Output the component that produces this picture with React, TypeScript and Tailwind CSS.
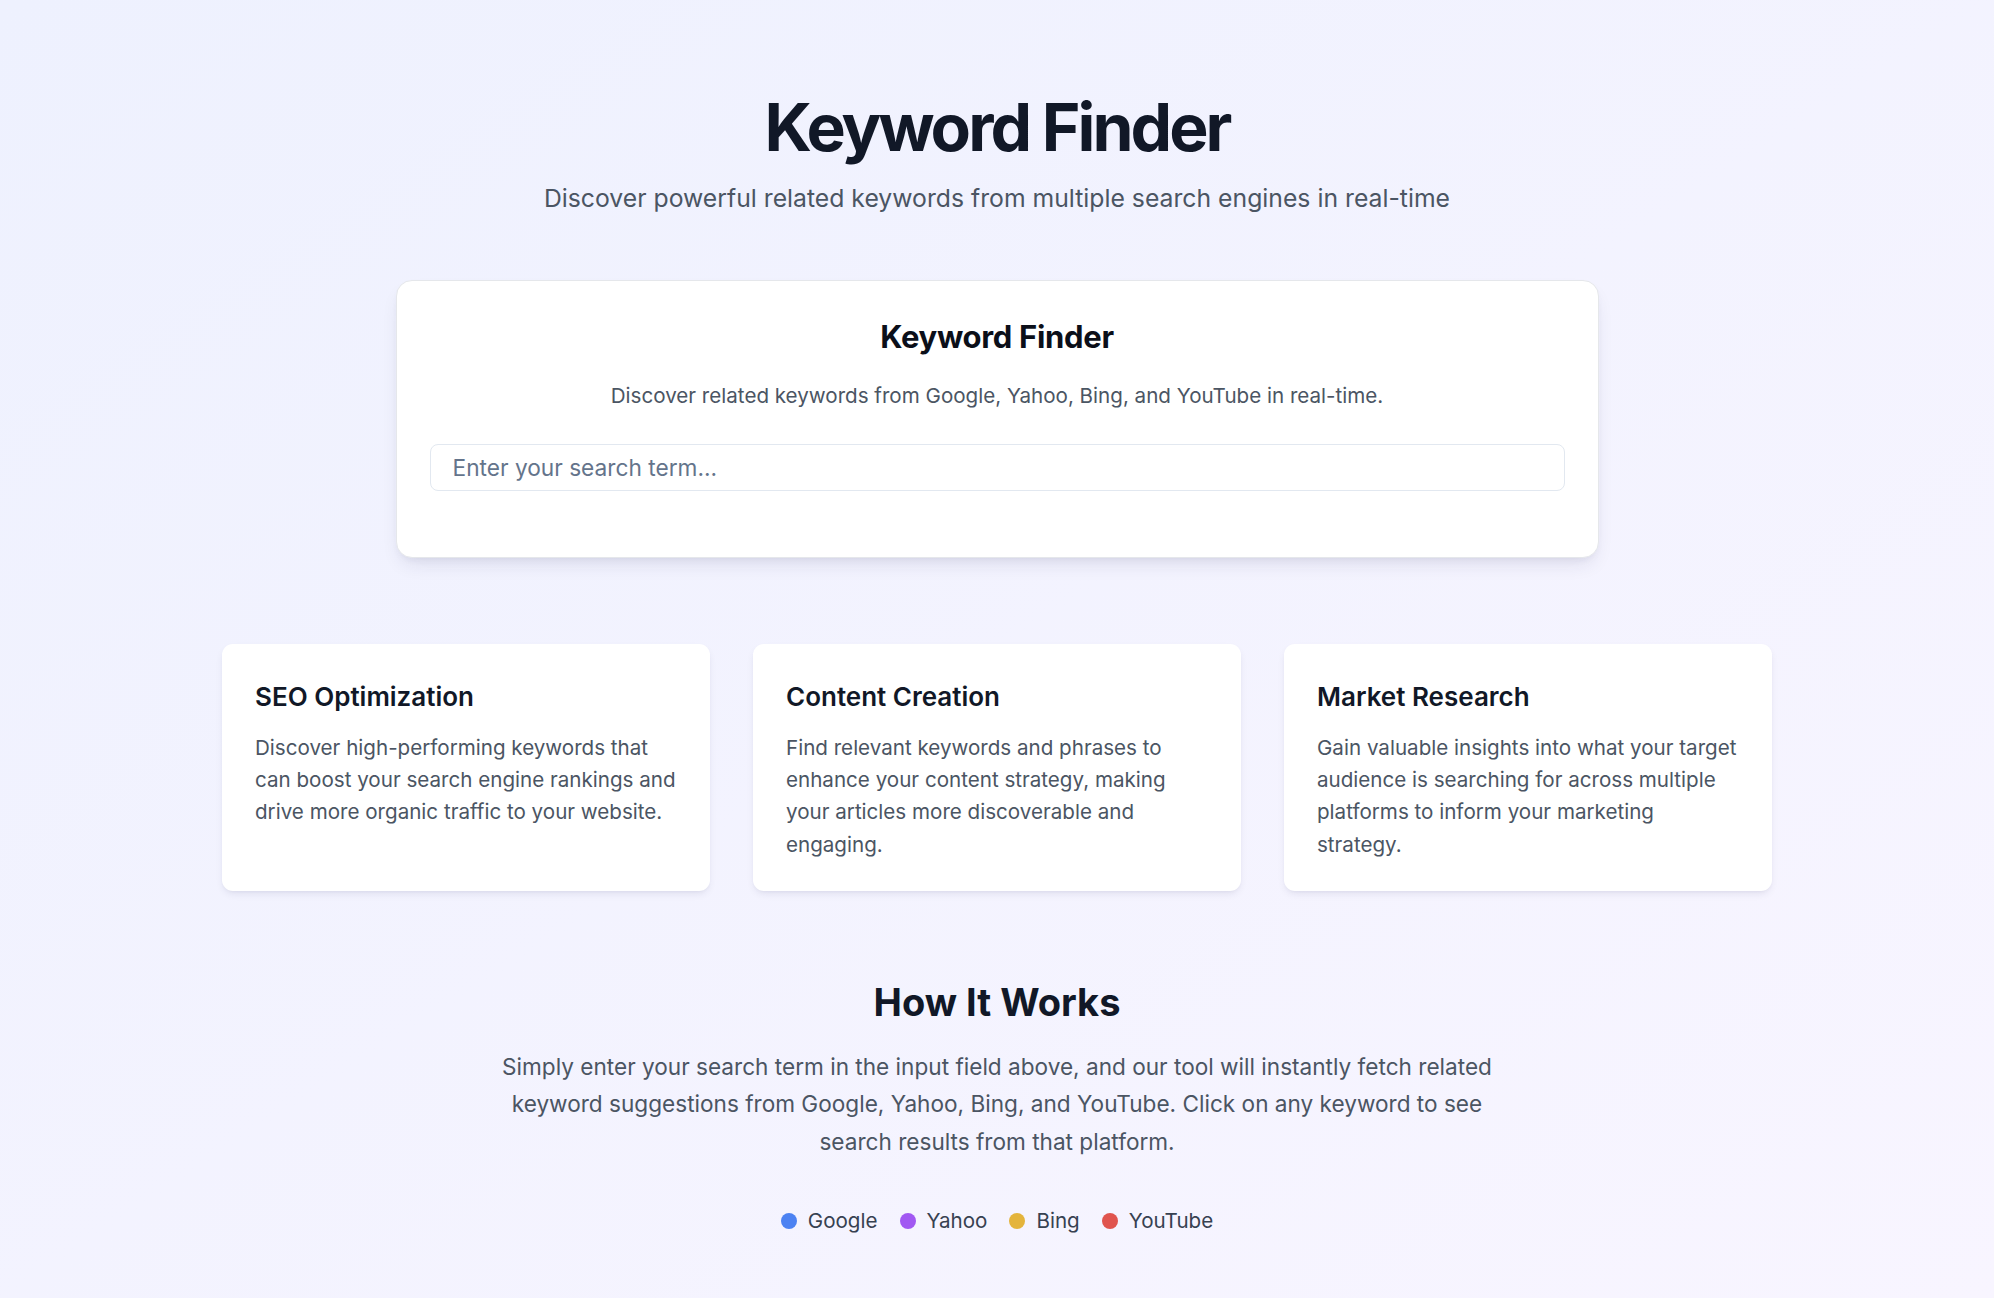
import { useState } from 'react';

const features = [
  {
    title: 'SEO Optimization',
    body: 'Discover high-performing keywords that can boost your search engine rankings and drive more organic traffic to your website.',
  },
  {
    title: 'Content Creation',
    body: 'Find relevant keywords and phrases to enhance your content strategy, making your articles more discoverable and engaging.',
  },
  {
    title: 'Market Research',
    body: 'Gain valuable insights into what your target audience is searching for across multiple platforms to inform your marketing strategy.',
  },
];

const engines = [
  { name: 'Google', dot: 'bg-[#4c82f2]' },
  { name: 'Yahoo', dot: 'bg-[#a158f2]' },
  { name: 'Bing', dot: 'bg-[#e4b43c]' },
  { name: 'YouTube', dot: 'bg-[#e0544e]' },
];

export default function App() {
  const [query, setQuery] = useState('');

  return (
    <div className="min-h-screen bg-linear-to-br from-[#eef1fe] to-[#f8f5ff] font-['Inter','Noto_Sans',sans-serif] pt-[94px] pb-[60px]">
      {/* Hero */}
      <header className="text-center">
        <h1 className="text-[66px] leading-none font-bold text-[#111827] tracking-[-0.045em]">Keyword Finder</h1>
        <p className="mt-[19px] text-[24.75px] leading-[38.5px] text-[#4b5563]">
          Discover powerful related keywords from multiple search engines in real-time
        </p>
      </header>

      {/* Search card */}
      <section className="mx-auto mt-[62px] w-[1203px] rounded-[16px] border border-[#e5e7eb] bg-white px-[33px] pt-[34px] pb-[66px] shadow-[0_10px_20px_-6px_rgba(30,30,80,0.12),0_4px_8px_-4px_rgba(30,30,80,0.08)]">
        <h2 className="text-center text-[31px] leading-[44px] font-bold tracking-[-0.01em] text-[#0b0f19]">Keyword Finder</h2>
        <p className="mt-[20px] text-center text-[20.6px] leading-[33px] text-[#4b5563]">
          Discover related keywords from Google, Yahoo, Bing, and YouTube in real-time.
        </p>
        <input
          value={query}
          onChange={(e) => setQuery(e.target.value)}
          placeholder="Enter your search term..."
          className="mt-[32px] block h-[47px] w-full rounded-[8px] border border-[#e2e8f0] bg-white px-[22px] text-[22.7px] text-[#111827] placeholder:text-[#64748b] outline-none"
        />
      </section>

      {/* Feature cards */}
      <section className="mx-auto mt-[86px] grid w-[1550px] grid-cols-3 gap-[43px]">
        {features.map((f) => (
          <div
            key={f.title}
            className="rounded-[11px] bg-white px-[33px] pt-[34px] pb-[30px] shadow-[0_4px_8px_-2px_rgba(30,30,80,0.10),0_2px_4px_-2px_rgba(30,30,80,0.06)]"
          >
            <h3 className="text-[26px] leading-[38.5px] font-semibold text-[#111827]">{f.title}</h3>
            <p className="mt-[15.5px] text-[20.6px] leading-[32.4px] text-[#4b5563]">{f.body}</p>
          </div>
        ))}
      </section>

      {/* How it works */}
      <section className="mx-auto mt-[87px] w-[1010px] text-center">
        <h2 className="text-[38px] leading-[49.5px] font-bold text-[#111827]">How It Works</h2>
        <p className="mt-[20px] text-[22.6px] leading-[37.5px] text-[#4b5563]">
          Simply enter your search term in the input field above, and our tool will instantly fetch related keyword
          suggestions from Google, Yahoo, Bing, and YouTube. Click on any keyword to see search results from that
          platform.
        </p>
        <div className="mt-[44px] flex items-center justify-center gap-[22px]">
          {engines.map((e) => (
            <div key={e.name} className="flex items-center gap-[11px]">
              <span className={`h-[16px] w-[16px] rounded-full ${e.dot}`} />
              <span className="text-[20.6px] leading-[33px] text-[#374151]">{e.name}</span>
            </div>
          ))}
        </div>
      </section>
    </div>
  );
}
